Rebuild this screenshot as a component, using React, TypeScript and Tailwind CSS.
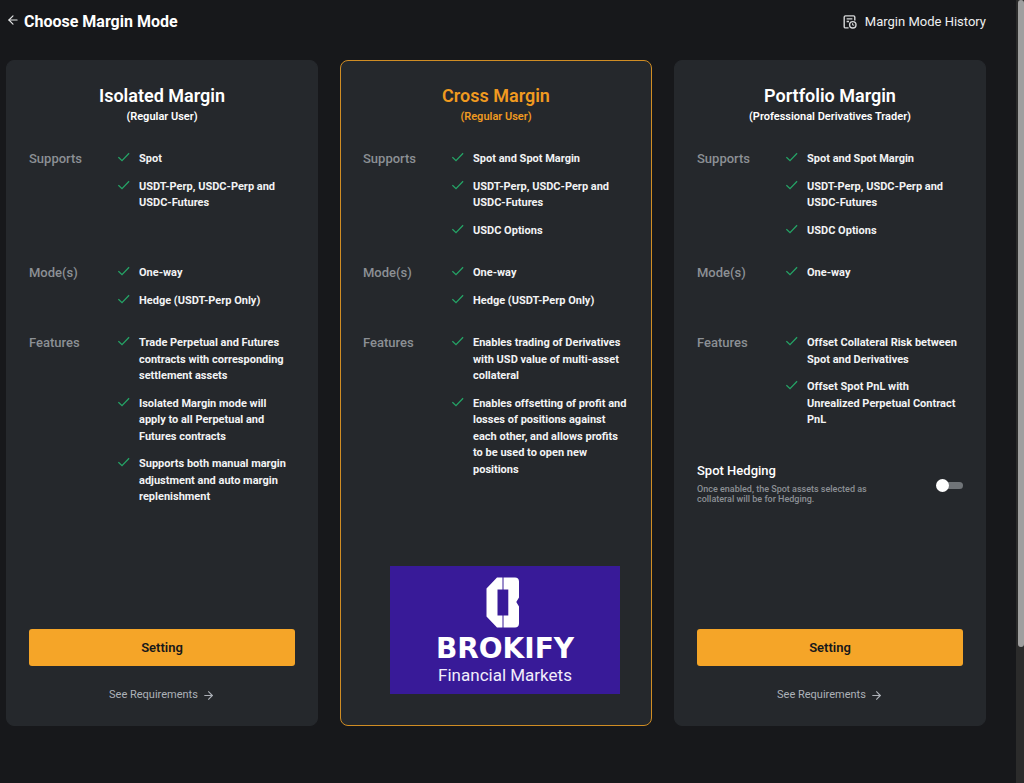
import React, { useState } from 'react';
import { ArrowLeft, ArrowRight } from 'lucide-react';

interface MarginMode {
  id: string;
  title: string;
  audience: string;
  supports: string[];
  modes: string[];
  features: string[];
  active?: boolean;
  hedging?: boolean;
}

const MARGIN_MODES: MarginMode[] = [
  {
    id: 'isolated',
    title: 'Isolated Margin',
    audience: '(Regular User)',
    supports: ['Spot', 'USDT-Perp, USDC-Perp and USDC-Futures'],
    modes: ['One-way', 'Hedge (USDT-Perp Only)'],
    features: [
      'Trade Perpetual and Futures contracts with corresponding settlement assets',
      'Isolated Margin mode will apply to all Perpetual and Futures contracts',
      'Supports both manual margin adjustment and auto margin replenishment'
    ]
  },
  {
    id: 'cross',
    title: 'Cross Margin',
    audience: '(Regular User)',
    supports: ['Spot and Spot Margin', 'USDT-Perp, USDC-Perp and USDC-Futures', 'USDC Options'],
    modes: ['One-way', 'Hedge (USDT-Perp Only)'],
    features: [
      'Enables trading of Derivatives with USD value of multi-asset collateral',
      'Enables offsetting of profit and losses of positions against each other, and allows profits to be used to open new positions'
    ],
    active: true
  },
  {
    id: 'portfolio',
    title: 'Portfolio Margin',
    audience: '(Professional Derivatives Trader)',
    supports: ['Spot and Spot Margin', 'USDT-Perp, USDC-Perp and USDC-Futures', 'USDC Options'],
    modes: ['One-way'],
    features: [
      'Offset Collateral Risk between Spot and Derivatives',
      'Offset Spot PnL with Unrealized Perpetual Contract PnL'
    ],
    hedging: true
  }
];

function CheckIcon() {
  return (
    <svg viewBox="0 0 12 10" className="mt-px h-[10px] w-3 shrink-0" fill="none" aria-hidden="true">
      <path d="M0.4 5.2 4 8.6 11.1 1.2" stroke="#25a366" strokeWidth="1.3" />
    </svg>
  );
}

function HistoryIcon() {
  return (
    <svg viewBox="0 0 14 14" className="size-[14px]" fill="none" stroke="#d5d6d8" strokeWidth="1.4" aria-hidden="true">
      <path d="M5.6 12.9H2.4A1.2 1.2 0 0 1 1.2 11.7V2A1.2 1.2 0 0 1 2.4 0.9H10.6A1.2 1.2 0 0 1 11.8 2V5.6" />
      <path d="M3.6 3.9H9.4M3.6 6.5H6" />
      <circle cx="9.8" cy="9.8" r="3.2" />
      <path d="M9.6 8.2V10.1H11.2" strokeWidth="1" />
    </svg>
  );
}

function BrokifyLogo() {
  return (
    <svg viewBox="0 0 230 128" className="mr-[9px] mb-[9px] h-32 w-[230px] self-end" role="img" aria-label="Brokify Financial Markets">
      <rect width="230" height="128" fill="#381a98" />
      <path d="M107 11.5H112.5V23.5H107.5V49.5H112.5V61.5H107L96.5 50.5V22.5Z" fill="#fff" />
      <path
        d="M113.5 11.5H125C127.5 11.5 129 13 129 15.5V31.5L126.3 36L129 40.5V57.5C129 60 127.5 61.5 125 61.5H113.5V49.5H118.3V23.5H113.5Z"
        fill="#fff"
      />
      <text x="115" y="92" textAnchor="middle" fill="#fff" fontSize="28" className="font-['DejaVu_Sans',sans-serif] font-bold">
        BROKIFY
      </text>
      <text x="115" y="115" textAnchor="middle" fill="#f1edfb" fontSize="17" className="font-['Roboto',sans-serif]">
        Financial Markets
      </text>
    </svg>
  );
}

interface DetailRowProps {
  label: string;
  items: string[];
  className?: string;
}

function DetailRow({ label, items, className = '' }: DetailRowProps) {
  return (
    <div className={`flex ${className}`}>
      <h3 className="w-[89px] shrink-0 text-[13px] leading-4 font-medium text-[#8c9095]">{label}</h3>
      <ul className="flex flex-1 flex-col gap-[11px]">
        {items.map((item) => (
          <li key={item} className="flex gap-[9px]">
            <CheckIcon />
            <span className="text-[11px] leading-normal font-bold text-[#f2f3f4]">{item}</span>
          </li>
        ))}
      </ul>
    </div>
  );
}

function SpotHedging() {
  const [enabled, setEnabled] = useState(false);

  return (
    <div className="mt-8 flex items-end justify-between">
      <div>
        <label htmlFor="spot-hedging" className="block text-[13px] leading-5 font-medium text-white">
          Spot Hedging
        </label>
        <p id="spot-hedging-hint" className="mt-[3px] w-[190px] text-[9px] leading-[10px] font-medium text-[#8c9095]">
          Once enabled, the Spot assets selected as collateral will be for Hedging.
        </p>
      </div>
      <input
        id="spot-hedging"
        type="checkbox"
        role="switch"
        aria-describedby="spot-hedging-hint"
        checked={enabled}
        onChange={(e) => setEnabled(e.target.checked)}
        className="mb-3 flex h-[13px] w-[27px] cursor-pointer appearance-none items-center before:z-10 before:size-[13px] before:rounded-full before:bg-white after:-ml-1 after:h-[7px] after:w-[18px] after:rounded-r-full after:bg-[#707478] checked:flex-row-reverse checked:after:bg-[#f5a623]"
      />
    </div>
  );
}

function ModeCard({ mode }: { mode: MarginMode }) {
  return (
    <section
      className={`flex flex-col rounded-lg border bg-[#25282c] px-[22px] pt-[22px] pb-[22px] ${
        mode.active ? 'border-[#d08d24]' : 'border-[#25282c]'
      }`}
    >
      <header className={`text-center ${mode.active ? 'text-[#f09a20]' : 'text-white'}`}>
        <h2 className="text-lg leading-[26px] font-semibold">{mode.title}</h2>
        <p className="text-[11px] leading-4 font-semibold">{mode.audience}</p>
      </header>

      <div className="mt-[26px] flex flex-col gap-[26px]">
        <DetailRow label="Supports" items={mode.supports} className="min-h-[88px]" />
        <DetailRow label="Mode(s)" items={mode.modes} className="min-h-11" />
        <DetailRow label="Features" items={mode.features} />
      </div>

      {mode.hedging && <SpotHedging />}

      <div className="mt-auto flex flex-col pt-6">
        {mode.active ? (
          <BrokifyLogo />
        ) : (
          <>
            <button type="button" className="h-[37px] rounded-[3px] bg-[#f5a528] text-[13px] font-semibold text-[#17181b]">
              Setting
            </button>
            <a href="#requirements" className="mt-[21px] flex items-center justify-center gap-1 text-[11px] leading-4 text-[#adb1b8]">
              See Requirements
              <ArrowRight size={13} strokeWidth={2} />
            </a>
          </>
        )}
      </div>
    </section>
  );
}

export default function App() {
  return (
    <div className="flex min-h-screen bg-[#17181b] font-['Roboto','Liberation_Sans',sans-serif]">
      <div className="flex flex-1 flex-col pr-[30px] pb-[57px] pl-[6px]">
        <header className="flex h-[60px] items-start justify-between pt-[10px]">
          <div className="flex items-center gap-1">
            <button type="button" aria-label="Back" className="pb-1 text-[#e4e5e6]">
              <ArrowLeft size={14} strokeWidth={2} />
            </button>
            <h1 className="text-base leading-6 font-bold text-white">Choose Margin Mode</h1>
          </div>
          <a href="#history" className="flex items-center gap-2 text-[13px] leading-6 text-[#eeeff0]">
            <HistoryIcon />
            Margin Mode History
          </a>
        </header>

        <main className="grid flex-1 grid-cols-3 gap-[22px]">
          {MARGIN_MODES.map((mode) => (
            <ModeCard key={mode.id} mode={mode} />
          ))}
        </main>
      </div>

      {/* Scroll track */}
      <div className="flex w-2 flex-col bg-[#2b2b2b] pl-[2px]" aria-hidden="true">
        <div className="grow-[19] rounded-[3px] bg-[#9f9f9f]" />
        <div className="grow-[4]" />
      </div>
    </div>
  );
}
